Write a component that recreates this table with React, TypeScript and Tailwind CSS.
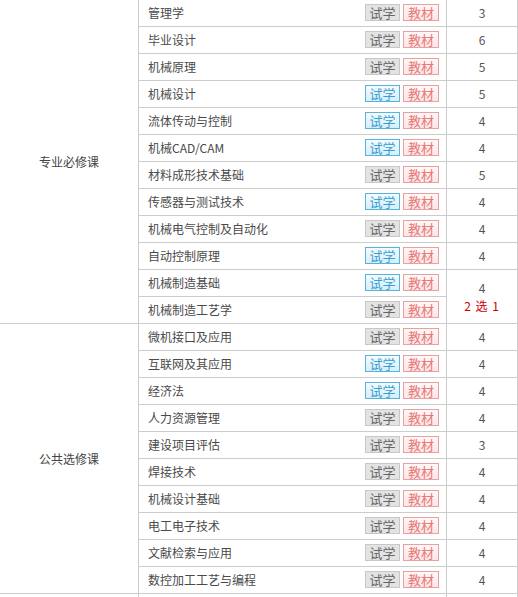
import React from 'react';

type Course = { name: string; trial: 'gray' | 'blue'; credit?: string };

const required: Course[] = [
  { name: '管理学', trial: 'gray', credit: '3' },
  { name: '毕业设计', trial: 'gray', credit: '6' },
  { name: '机械原理', trial: 'gray', credit: '5' },
  { name: '机械设计', trial: 'blue', credit: '5' },
  { name: '流体传动与控制', trial: 'blue', credit: '4' },
  { name: '机械CAD/CAM', trial: 'blue', credit: '4' },
  { name: '材料成形技术基础', trial: 'gray', credit: '5' },
  { name: '传感器与测试技术', trial: 'blue', credit: '4' },
  { name: '机械电气控制及自动化', trial: 'gray', credit: '4' },
  { name: '自动控制原理', trial: 'blue', credit: '4' },
  { name: '机械制造基础', trial: 'blue' },
  { name: '机械制造工艺学', trial: 'gray' },
];

const electives: Course[] = [
  { name: '微机接口及应用', trial: 'gray', credit: '4' },
  { name: '互联网及其应用', trial: 'blue', credit: '4' },
  { name: '经济法', trial: 'blue', credit: '4' },
  { name: '人力资源管理', trial: 'gray', credit: '4' },
  { name: '建设项目评估', trial: 'gray', credit: '3' },
  { name: '焊接技术', trial: 'gray', credit: '4' },
  { name: '机械设计基础', trial: 'gray', credit: '4' },
  { name: '电工电子技术', trial: 'gray', credit: '4' },
  { name: '文献检索与应用', trial: 'gray', credit: '4' },
  { name: '数控加工工艺与编程', trial: 'gray', credit: '4' },
];

const cell = 'border-r border-b border-[#cccccc]';

function Badges({ trial }: { trial: 'gray' | 'blue' }) {
  return (
    <div className="flex gap-[3px] pr-[7px] mb-[2px]">
      {trial === 'blue' ? (
        <span className="w-[35px] h-[17px] border border-[#5ab4d9] bg-gradient-to-b from-[#f4fbff] to-[#d6eefa] text-[#3a9fd2] text-[13px] leading-[15px] text-center">
          试学
        </span>
      ) : (
        <span className="w-[35px] h-[17px] border border-[#c8c8c8] bg-[#e3e3e3] text-[#666666] text-[13px] leading-[15px] text-center">
          试学
        </span>
      )}
      <span className="w-[36px] h-[17px] border border-[#e8a0a0] bg-gradient-to-b from-[#fff7f7] to-[#fde5e5] text-[#e67878] text-[13px] leading-[15px] text-center">
        教材
      </span>
    </div>
  );
}

function CourseRow({ c }: { c: Course }) {
  return (
    <>
      <div className={`${cell} col-start-2 flex items-center justify-between pl-[9px] text-[#4a4a4a]`}>
        <span>{c.name}</span>
        <Badges trial={c.trial} />
      </div>
      {c.credit && (
        <div className={`${cell} col-start-3 flex items-center justify-center text-[#555555]`}>
          {c.credit}
        </div>
      )}
    </>
  );
}

export default function App() {
  return (
    <div
      className="w-[518px] h-[597px] overflow-hidden bg-white text-[12px]"
      style={{ fontFamily: '"Noto Sans CJK SC", "Noto Sans", sans-serif' }}
    >
      <div className="grid grid-cols-[139px_308px_71px] auto-rows-[27px]">
        <div className={`${cell} col-start-1 row-span-12 flex items-center justify-center text-[#444444]`}>
          专业必修课
        </div>
        {required.map((c, i) => (
          <React.Fragment key={c.name}>
            <CourseRow c={c} />
            {i === 10 && (
              <div className={`${cell} col-start-3 row-span-2 flex flex-col items-center justify-center leading-[18px]`}>
                <span className="text-[#555555]">4</span>
                <span className="text-[#cc0000] tracking-[1px]">2 选 1</span>
              </div>
            )}
          </React.Fragment>
        ))}
        <div className={`${cell} col-start-1 row-span-10 flex items-center justify-center text-[#444444]`}>
          公共选修课
        </div>
        {electives.map((c) => (
          <CourseRow key={c.name} c={c} />
        ))}
        <div className={`${cell} col-start-1`} />
        <div className={`${cell} col-start-2`} />
        <div className={`${cell} col-start-3`} />
      </div>
    </div>
  );
}
